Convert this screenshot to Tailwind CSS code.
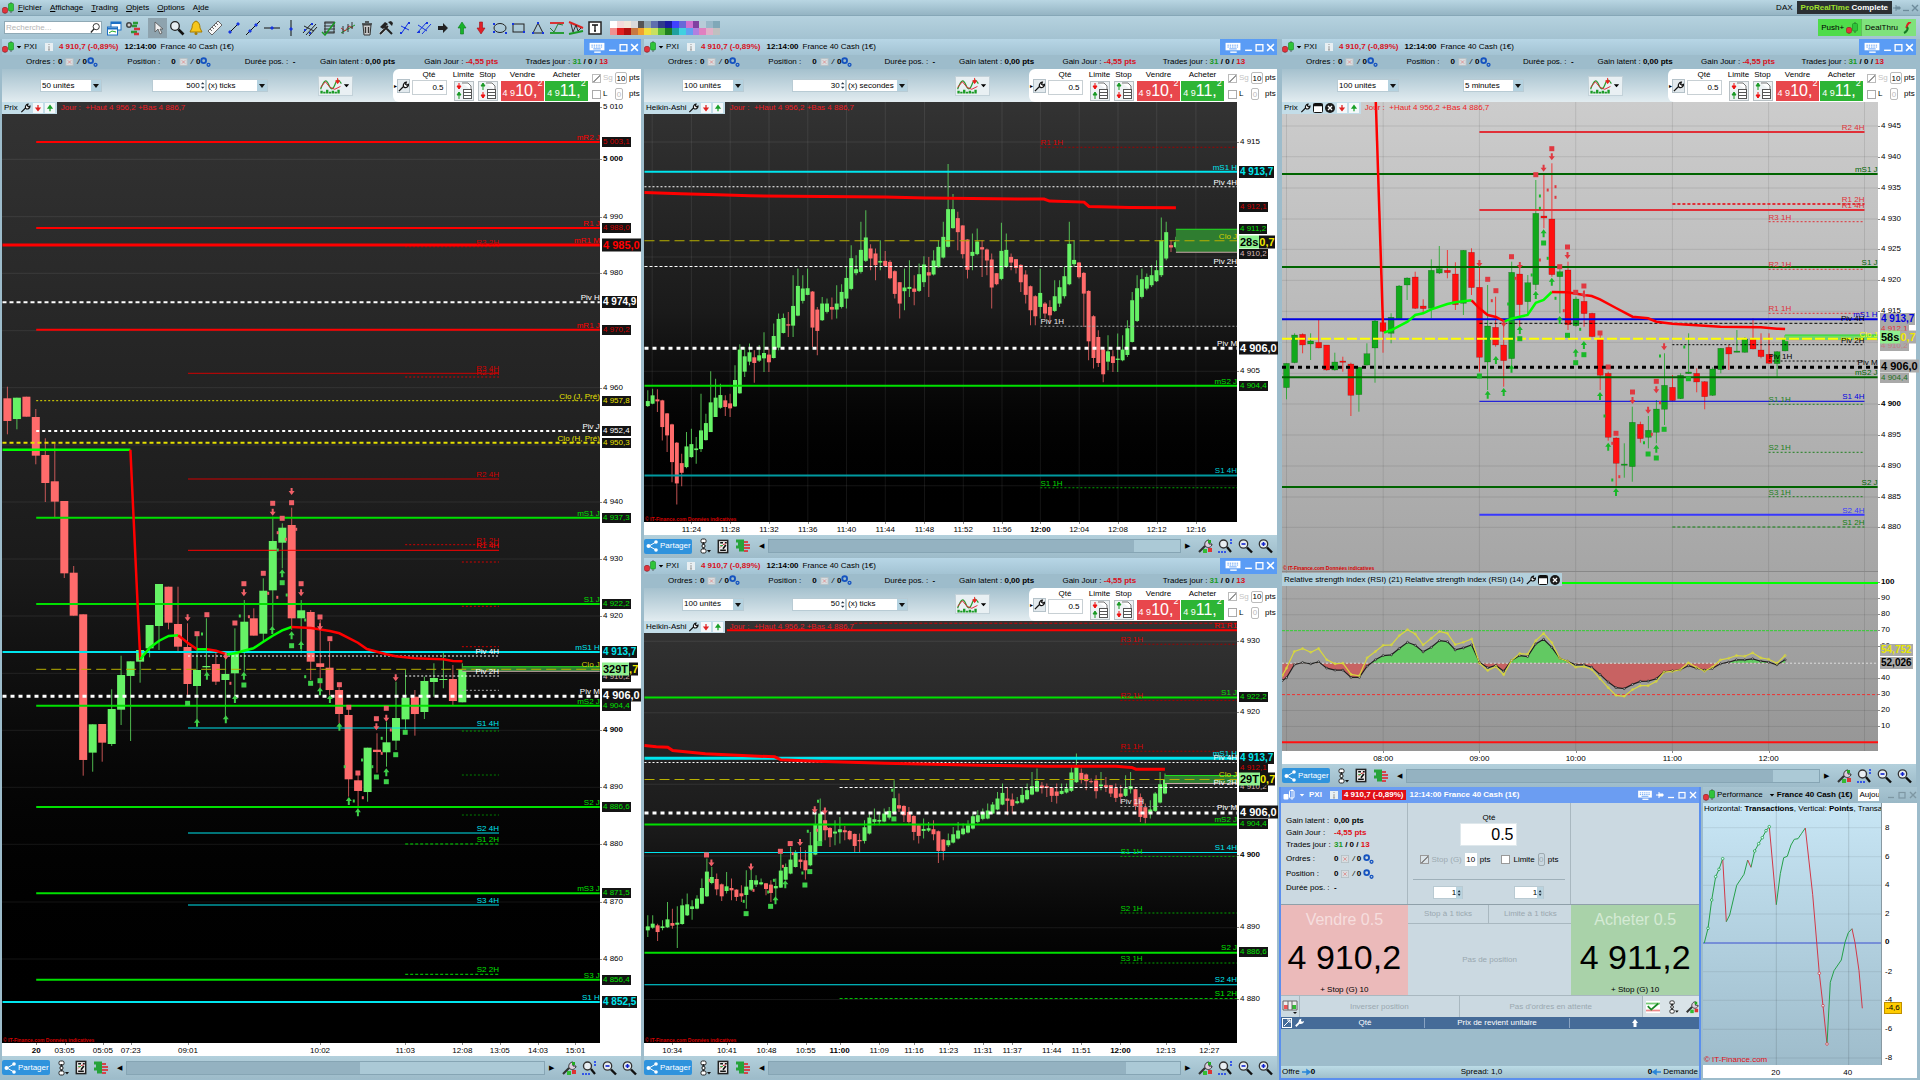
<!DOCTYPE html>
<html lang="fr">
<head>
  <meta charset="UTF-8" />
  <title>ProRealTime Complete - DAX</title>
  <script src="https://cdn.jsdelivr.net/npm/@tailwindcss/browser@4"></script>
</head>
<body class="min-h-screen flex flex-col bg-[#9dbccb] text-[8px] leading-[10px] text-black font-['Liberation_Sans',Arial,sans-serif]">

  <!-- Icon sprite -->
  <svg class="hidden">
    <symbol id="candles" viewBox="0 0 12 12"><path d="M3 5v7M9 0v11" stroke="#333" stroke-width=".7"/><rect x=".5" y="5.500" width="5" height="5.500" rx="1.500" fill="#e0343c" stroke="#a01820" stroke-width=".6"/><rect x="6.500" y="1.500" width="5" height="7.500" rx="1" fill="#2fc43a" stroke="#148a1e" stroke-width=".6"/></symbol>
    <symbol id="candles-w" viewBox="0 0 12 12"><path d="M9 0v11" stroke="#fff" stroke-width=".8"/><rect x=".5" y="5" width="5" height="5.500" rx="1" fill="#fff"/><rect x="6.500" y="1.500" width="4.500" height="7.500" rx="1" fill="none" stroke="#fff"/></symbol>
    <symbol id="caret" viewBox="0 0 8 8"><path d="M1 2.500h6L4 6z" fill="currentColor"/></symbol>
    <symbol id="info" viewBox="0 0 8 8"><rect width="8" height="8" fill="#e8eff2"/><path d="M4 1v1M4 3v4M3 7h2" stroke="#999"/></symbol>
    <symbol id="keyb" viewBox="0 0 18 14"><rect x="1" y="2" width="16" height="8" fill="#fff"/><path d="M3 4.500h12M3 6.500h12" stroke="#5a9cf5" stroke-dasharray="1.500 1"/><path d="M5 8.500h8" stroke="#5a9cf5"/><path d="M6 12h7" stroke="#fff" stroke-width="1.500"/></symbol>
    <symbol id="min" viewBox="0 0 8 8"><path d="M1 6.500h6" stroke="currentColor" stroke-width="1.300"/></symbol>
    <symbol id="max" viewBox="0 0 8 8"><rect x="1" y="1.500" width="6" height="5.500" fill="none" stroke="currentColor" stroke-width="1.200"/></symbol>
    <symbol id="close" viewBox="0 0 8 8"><path d="M1 1l6 6M7 1L1 7" stroke="currentColor" stroke-width="1.400"/></symbol>
    <symbol id="pin" viewBox="0 0 8 8"><path d="M0 4h3M3 1v6M3 3h4v2H3z" stroke="currentColor" fill="currentColor"/></symbol>
    <symbol id="xbox" viewBox="0 0 10 10"><rect x=".5" y=".5" width="9" height="9" fill="#d8dde0" stroke="#b5bfc4"/><path d="M3 3l4 4M7 3L3 7" stroke="#d88"/></symbol>
    <symbol id="gears" viewBox="0 0 12 12"><circle cx="4" cy="4" r="2.600" fill="none" stroke="#1553c0" stroke-width="2"/><circle cx="9.300" cy="8.500" r="1.600" fill="none" stroke="#1553c0" stroke-width="1.400"/></symbol>
    <symbol id="wrench" viewBox="0 0 12 12"><path d="M1 11l5-5M6 6c-.6-2 .8-4.500 3-4.700L8.300 3.500 9.500 4.500l1.900-.7C11.500 6 9 7.700 7 7z" stroke="#111" stroke-width="1.400" fill="#fff"/></symbol>
    <symbol id="wrench-w" viewBox="0 0 12 12"><path d="M1 11l5-5" stroke="#fff" stroke-width="2.400"/><path d="M5 6c-.6-3 1.200-5 3.500-5L8 4l1.500 1L12 4c0 3-3 4.500-5.500 4z" fill="#fff"/></symbol>
    <symbol id="down" viewBox="0 0 8 8"><rect width="8" height="8" fill="#f4f8fa"/><path d="M4 1.500v3M2.500 4L4 6l1.500-2z" stroke="#e02020" fill="#e02020"/></symbol>
    <symbol id="up" viewBox="0 0 8 8"><rect width="8" height="8" fill="#f4f8fa"/><path d="M4 6.500v-3M2.500 4L4 2l1.500 2z" stroke="#18a028" fill="#18a028"/></symbol>
    <symbol id="win" viewBox="0 0 10 10"><rect x=".5" y=".5" width="9" height="9" rx="1" fill="#fff" stroke="#111"/><path d="M.5 2h9" stroke="#111" stroke-width="2.500"/></symbol>
    <symbol id="xround" viewBox="0 0 10 10"><circle cx="5" cy="5" r="5" fill="#1b1b1b"/><path d="M3 3l4 4M7 3L3 7" stroke="#fff" stroke-width="1.400"/></symbol>
    <symbol id="indic" viewBox="0 0 24 18"><path d="M1 13C5 2 7 2 10 9s5 2 7-3 4-2 6 1" stroke="#2a9a30" fill="none" stroke-width="1.300"/><path d="M1 11l5-6 5 6 5 2 6-3" stroke="#d23" fill="none"/><path d="M19 1v5M17 4l2 3 2-3z" stroke="#e22" fill="#e22"/><path d="M2 17.500v-3M5 17.500v-2M8 17.500v-4M11 17.500v-2M14 17.500v-3M17 17.500v-2M20 17.500v-4" stroke="#1a9a25" stroke-width="2.500"/></symbol>
    <symbol id="ord-l" viewBox="0 0 20 20"><rect x=".5" y=".5" width="19" height="19" fill="#eef2f4" stroke="#b8c0c4"/><path d="M8 2h6l3 3v4" fill="#fff" stroke="#777"/><rect x="9.500" y="8.500" width="8" height="9" fill="#fff" stroke="#555"/><path d="M10 11.500h7M10 14.500h7" stroke="#555"/><path d="M5 2v5M3 5l2 3 2-3z" stroke="#e11" fill="#e11"/><path d="M5 18v-6M3 14l2-3 2 3z" stroke="#1a9a25" fill="#1a9a25"/></symbol>
    <symbol id="ord-s" viewBox="0 0 20 20"><rect x=".5" y=".5" width="19" height="19" fill="#eef2f4" stroke="#b8c0c4"/><path d="M8 2h6l3 3v4" fill="#fff" stroke="#777"/><rect x="9.500" y="8.500" width="8" height="9" fill="#fff" stroke="#555"/><path d="M10 11.500h7M10 14.500h7" stroke="#555"/><path d="M5 9V4M3 5l2-3 2 3z" stroke="#1a9a25" fill="#1a9a25"/><path d="M5 11v6M3 14l2 3 2-3z" stroke="#e11" fill="#e11"/></symbol>
    <symbol id="share" viewBox="0 0 12 12"><path d="M10 2L3 6l7 4" stroke="#fff" fill="none"/><circle cx="10" cy="2" r="1.800" fill="#fff"/><circle cx="2.500" cy="6" r="2" fill="#fff"/><circle cx="10" cy="10" r="1.800" fill="#fff"/></symbol>
    <symbol id="chain" viewBox="0 0 14 16"><rect x="4" y="1" width="5" height="4" rx="1.500" fill="#fff" stroke="#222"/><path d="M6.500 4v8" stroke="#222" stroke-width="2"/><circle cx="6.500" cy="8" r="1.600" fill="#fff" stroke="#222"/><rect x="4" y="11" width="5" height="4" rx="1.500" fill="#fff" stroke="#222"/><path d="M10 12h4l-2 2.500z" fill="#111"/></symbol>
    <symbol id="sheet" viewBox="0 0 14 16"><rect x="2" y="1.500" width="10" height="13" fill="#eee" stroke="#222" stroke-width="1.600"/><path d="M4 4h3M9 4h2M4 12h6M7 10.500l3-4" stroke="#111" stroke-width="1.800"/><path d="M4 9l3-3 3-1" stroke="#c33" fill="none"/><path d="M4 7h3" stroke="#2a3"/></symbol>
    <symbol id="depth" viewBox="0 0 16 16"><path d="M1 3h8M3 6h6M1 9h8M4 12h5" stroke="#26a33a" stroke-width="2.800"/><path d="M9 4h4M9 7h6M9 10h6M9 13h4" stroke="#d4444c" stroke-width="2"/></symbol>
    <symbol id="tool-c" viewBox="0 0 16 16"><path d="M2 14l6-6" stroke="#333" stroke-width="2.200"/><path d="M8 8c-1-3 1-6 4-6v4l3 0c0 3-4 5-7 2z" fill="#dcd" stroke="#333"/><path d="M6 11h4v4H6z" fill="#3b3"/><path d="M11 10h4v4h-4z" fill="#d33"/><path d="M11 2h3v3h-3z" fill="#2a2"/></symbol>
    <symbol id="z-fit" viewBox="0 0 16 16"><circle cx="6.500" cy="6" r="4" fill="#e8eef2" stroke="#333" stroke-width="1.400"/><path d="M10 9l4 5" stroke="#111" stroke-width="2.200"/><path d="M14 1v6M1 14h8" stroke="#13e" stroke-width="1.500" stroke-dasharray="2 1"/></symbol>
    <symbol id="z-out" viewBox="0 0 16 16"><circle cx="6.500" cy="6" r="4.200" fill="#e8eef2" stroke="#333" stroke-width="1.300"/><path d="M10 9.500l5 5" stroke="#111" stroke-width="2.400"/><path d="M4.500 6h4" stroke="#12c" stroke-width="1.600"/></symbol>
    <symbol id="z-in" viewBox="0 0 16 16"><circle cx="6.500" cy="6" r="4.200" fill="#e8eef2" stroke="#333" stroke-width="1.300"/><path d="M10 9.500l5 5" stroke="#111" stroke-width="2.400"/><path d="M4.500 6h4M6.500 4v4" stroke="#12c" stroke-width="1.600"/></symbol>
  </svg>

  <!-- Menu bar -->
  <header class="h-[15px] flex items-center justify-between bg-linear-to-b from-[#b9d6e3] to-[#94b4c3]">
    <nav class="flex items-center gap-2 pl-[2px]">
      <svg class="w-3 h-3"><use href="#candles"/></svg>
      <a href="#" class="-ml-1"><u>F</u>ichier</a>
      <a href="#"><u>A</u>ffichage</a>
      <a href="#"><u>T</u>rading</a>
      <a href="#"><u>O</u>bjets</a>
      <a href="#"><u>O</u>ptions</a>
      <a href="#">A<u>i</u>de</a>
    </nav>
    <div class="flex items-center h-full">
      <span class="mr-1">DAX</span>
      <span class="bg-[#2b2f33] text-white font-bold px-1 h-[13px] leading-[13px]"><span class="text-[#9fe02c]">ProRealTime</span> Complete</span>
      <span class="flex items-center gap-px text-[#6d8b9b] px-px">
        <svg class="w-2 h-2"><use href="#pin"/></svg>
        <svg class="w-2 h-2"><use href="#min"/></svg>
        <svg class="w-2 h-2"><use href="#close"/></svg>
      </span>
    </div>
  </header>

  <!-- Drawing toolbar -->
  <div class="h-6 flex items-center justify-between bg-linear-to-b from-[#b5d2df] to-[#a3c2d1] border-t border-[#86a7b7]">
    <div class="flex items-center gap-[3px] pl-1">
      <label class="flex items-center w-[98px] h-[13px] bg-white border border-[#8fa9b5] mr-px">
        <input type="text" placeholder="Recherche..." aria-label="Recherche" class="w-full pl-px outline-none placeholder:text-[#b5b5b5]" />
        <svg class="w-3 h-3" viewBox="0 0 12 12"><circle cx="7" cy="4.500" r="3.500" fill="none" stroke="#222"/><path d="M4.500 7L1 11" stroke="#222" stroke-width="1.500"/></svg>
      </label>
      <svg class="size-4" viewBox="0 0 16 16"><rect x="5" y="2" width="10" height="8" fill="#fff" stroke="#1d6fc4"/><rect x="1.500" y="7" width="10" height="8" fill="#fff" stroke="#1d6fc4"/><path d="M2 8.500h9M5 3h10" stroke="#1d6fc4" stroke-width="2"/><path d="M3 13l3-2 4 1" stroke="#2a2" fill="none"/></svg>
      <svg class="size-4 mr-1" viewBox="0 0 16 16"><circle cx="4" cy="5" r="3" fill="#444"/><path d="M2.500 5h3M4 3.500v3" stroke="#fff"/><path d="M8 3h5M7 6h5M6 12h6" stroke="#2a9a35" stroke-width="2.600"/><path d="M9 9h6M9 14h5" stroke="#d4333c" stroke-width="2.600"/></svg>
      <button class="w-[19px] h-5 -mr-px flex items-center justify-center bg-[#8ea3ae]"><svg class="w-3 h-4" viewBox="0 0 12 16"><path d="M3 2v10l3-3 2 5 2-1-2-4h3z" fill="#eee" stroke="#555" stroke-width=".8"/></svg></button>
      <svg class="size-4" viewBox="0 0 16 16"><circle cx="6" cy="6" r="4.300" fill="#e6eef2" stroke="#222" stroke-width="1.300"/><path d="M9.500 9.500l5 5" stroke="#111" stroke-width="2.600"/></svg>
      <svg class="size-4" viewBox="0 0 16 16"><path d="M8 1c3 1 4 4 4 7l2 4H2l2-4c0-3 1-6 4-7z" fill="#f6c61c" stroke="#a67c00"/><circle cx="8" cy="13.500" r="1.500" fill="#a67c00"/></svg>
      <svg class="size-4" viewBox="0 0 16 16"><path d="M11 1l4 4L5 15l-4-4z" fill="#f5f5f5" stroke="#666"/><path d="M9 3l2 2M7 5l2 2M5 7l2 2M3 9l2 2" stroke="#666"/></svg>
      <svg class="size-4" viewBox="0 0 16 16"><path d="M4 12l8-8" stroke="#111"/><path d="M3 11h2v2H3zM11 3h2v2h-2z" fill="#1636e0" stroke="#1636e0"/></svg>
      <svg class="size-4" viewBox="0 0 16 16"><path d="M1 15L15 1" stroke="#111"/><path d="M4 10h2v2H4zM10 4h2v2h-2z" fill="#1636e0" stroke="#1636e0"/></svg>
      <svg class="size-4" viewBox="0 0 16 16"><path d="M0 8h16" stroke="#111"/><path d="M7 7h2v2H7z" fill="#1636e0" stroke="#1636e0"/></svg>
      <svg class="size-4" viewBox="0 0 16 16"><path d="M8 0v16" stroke="#111"/><path d="M7 8h2v2H7z" fill="#1636e0" stroke="#1636e0"/></svg>
      <svg class="size-4" viewBox="0 0 16 16"><path d="M1 13L10 3M4 15L14 4M7 16l8-9M2 6l10 5" stroke="#222"/><path d="M2 9h2v2H2zM9 3h2v2H9zM7 12h2v2H7z" fill="#1636e0"/></svg>
      <svg class="size-4" viewBox="0 0 16 16"><path d="M3 3h11M3 6h11M3 9h11M3 12h11" stroke="#333"/><rect x="4" y="2" width="9" height="11" fill="none" stroke="#333"/><path d="M1 12l3 3L14 2" stroke="#1a9a25" fill="none" stroke-width="1.500"/></svg>
      <svg class="size-4" viewBox="0 0 16 16"><path d="M1 13L15 5" stroke="#1a9a25"/><path d="M1 8l4 3 4-5 4 2" stroke="#c33" fill="none"/><path d="M3 6v8M8 4v8M12 2v7" stroke="#333"/></svg>
      <svg class="size-4" viewBox="0 0 16 16"><path d="M4 5h8l-1 10H5z" fill="#ccc" stroke="#333"/><path d="M3 4h10M6 2h4M6.500 7v6M9.500 7v6" stroke="#333" stroke-width="1.300"/></svg>
      <svg class="size-4" viewBox="0 0 16 16"><path d="M2 14l8-8" stroke="#eee" stroke-width="3"/><path d="M2 14l8-8M14 14L6 6" stroke="#222" stroke-width="2"/><path d="M2 7l5-5 3 2-5 5zM10 2l4 4 1-3-2-2z" fill="#222"/></svg>
      <svg class="size-4" viewBox="0 0 16 16"><path d="M4 14l8-12M4 6l8 4" stroke="#1636e0"/><path d="M3 12h2v2H3zM11 2h2v2h-2zM7 7h2v2H7z" fill="#1636e0"/></svg>
      <svg class="size-4" viewBox="0 0 16 16"><path d="M1 13L11 2M6 14l9-10M2 5l9 6" stroke="#1636e0"/><path d="M2 11h2v2H2zM10 2h2v2h-2z" fill="#1636e0"/></svg>
      <svg class="size-4" viewBox="0 0 16 16"><path d="M3 6h5V3l5 5-5 5v-3H3z" fill="#222"/></svg>
      <svg class="size-4" viewBox="0 0 16 16"><path d="M6.500 14V8H4l4-6 4 6H9.500v6z" fill="#17b32a" stroke="#0b7a18" stroke-width=".6"/></svg>
      <svg class="size-4" viewBox="0 0 16 16"><path d="M6.500 2v6H4l4 6 4-6H9.500V2z" fill="#e02028" stroke="#a01018" stroke-width=".6"/></svg>
      <svg class="size-4" viewBox="0 0 16 16"><ellipse cx="8" cy="8" rx="6" ry="4.500" fill="none" stroke="#222"/><path d="M1 3h2v2H1zM1 11h2v2H1zM13 12h2v2h-2z" fill="#1636e0"/></svg>
      <svg class="size-4" viewBox="0 0 16 16"><rect x="2" y="4" width="11" height="8" fill="none" stroke="#222"/><path d="M1 3h2v2H1zM12 11h2v2h-2z" fill="#1636e0"/></svg>
      <svg class="size-4" viewBox="0 0 16 16"><path d="M8 3L3 13h10z" fill="none" stroke="#222"/><path d="M7 2h2v2H7zM2 12h2v2H2zM12 12h2v2h-2z" fill="#1636e0"/></svg>
      <svg class="size-4" viewBox="0 0 16 16"><path d="M1 3h14" stroke="#d22" stroke-width="1.800"/><path d="M1 13h14" stroke="#1a9a25" stroke-width="1.800"/><path d="M1 8l4 4 4-8 5 1" stroke="#2a7a35" fill="none"/></svg>
      <svg class="size-4" viewBox="0 0 16 16"><path d="M1 2l14 6" stroke="#d22" stroke-width="2"/><path d="M1 14l14-3" stroke="#1a9a25" stroke-width="2"/><path d="M3 4l2 8 3-7 2 6 3-3" stroke="#333" fill="none"/></svg>
      <svg class="size-4" viewBox="0 0 16 16"><rect x="2" y="2" width="12" height="12" fill="#fff" stroke="#222" stroke-width="1.500"/><path d="M5 5h6M8 5v6M7 11h2" stroke="#111" stroke-width="1.300"/></svg>
      <div id="palette" class="grid grid-cols-16 w-[110px] h-[14px] ml-1"></div>
    </div>
    <div class="flex items-center pr-1 h-full">
      <button class="h-[17px] px-[3px] flex items-center gap-[2px] bg-[#4fdc4a]">Push+ <svg class="w-3 h-3"><use href="#candles"/></svg></button>
      <button class="h-[17px] px-[3px] flex items-center gap-[3px] bg-[#7fe27c] border-l border-[#5fc05c]">DealThru <svg class="w-3 h-3" viewBox="0 0 12 12"><path d="M10 0C5 1 7 4 5 6" stroke="#d22" stroke-width="2" fill="none"/><path d="M6 5c2 2-1 5-3 6" stroke="#157a22" stroke-width="2" fill="none"/></svg></button>
    </div>
  </div>

  <!-- Workspace -->
  <main class="flex-1 grid grid-cols-[642fr_637fr_641fr] bg-[#9dbccb]">
    <section data-chart="c1" class="flex flex-col min-w-0 pl-[2px] pr-px pb-px"></section>

    <div class="flex flex-col min-w-0">
      <section data-chart="c2" class="flex flex-col flex-[519] min-w-0 px-[2px]"></section>
      <section data-chart="c3" class="flex flex-col flex-[522] min-w-0 px-[2px] pb-px"></section>
    </div>

    <div class="flex flex-col min-w-0">
      <section data-chart="c4" class="flex flex-col flex-[748] min-w-0 pl-[3px] pr-1"></section>

      <div class="flex-[293] grid grid-cols-[422fr_219fr] min-h-0">
        <!-- Order ticket -->
        <section class="flex flex-col min-w-0 border-x-2 border-b-2 border-[#5b8fee] bg-[#cbd9e1]">
          <div class="h-4 flex items-center gap-1 bg-[#6b9df2] text-white px-[2px]">
            <svg class="w-3 h-3"><use href="#candles-w"/></svg>
            <svg class="w-[6px] h-[6px]"><use href="#caret"/></svg>
            <span class="font-bold">PXI</span>
            <svg class="w-2 h-2 ml-1"><use href="#info"/></svg>
            <span class="bg-[#e01018] font-bold px-[2px]">4 910,7 (-0,89%)</span>
            <span class="font-bold">12:14:00 France 40 Cash (1€)</span>
            <span class="ml-auto flex items-center gap-[3px]">
              <svg class="w-4 h-3"><use href="#keyb"/></svg>
              <svg class="w-2 h-2"><use href="#pin"/></svg>
              <svg class="w-2 h-2"><use href="#min"/></svg>
              <svg class="w-2 h-2"><use href="#max"/></svg>
              <svg class="w-2 h-2"><use href="#close"/></svg>
            </span>
          </div>
          <div class="grid grid-cols-[127fr_164fr_128fr] h-[102px] border-b border-[#8fa0a9]">
            <dl class="grid grid-cols-[48px_1fr] auto-rows-min pt-[13px] pl-[5px] border-r border-[#a9b8c0]">
              <dt class="h-3">Gain latent :</dt><dd class="font-bold">0,00 pts</dd>
              <dt class="h-3">Gain Jour :</dt><dd class="font-bold text-[#e01018]">-4,55 pts</dd>
              <dt class="h-[14px]">Trades jour :</dt><dd class="font-bold"><span class="text-[#1a9a25]">31</span> / 0 / <span class="text-[#e01018]">13</span></dd>
              <dt class="h-[15px]">Ordres :</dt><dd class="font-bold flex gap-[2px] h-[10px] items-center">0 <svg class="w-[10px] h-2"><use href="#xbox"/></svg> <i class="font-normal">/</i> 0<svg class="w-[11px] h-[11px]"><use href="#gears"/></svg></dd>
              <dt class="h-[14px]">Position :</dt><dd class="font-bold flex gap-[2px] h-[10px] items-center">0 <svg class="w-[10px] h-2"><use href="#xbox"/></svg> <i class="font-normal">/</i> 0<svg class="w-[11px] h-[11px]"><use href="#gears"/></svg></dd>
              <dt class="h-3">Durée pos. :</dt><dd class="font-bold">-</dd>
            </dl>
            <div class="flex flex-col items-center border-r border-[#a9b8c0]">
              <label for="tk-qte" class="pt-[10px]">Qté</label>
              <input id="tk-qte" type="text" value="0.5" class="w-[57px] h-[23px] bg-white text-right pr-[3px] text-base border border-[#dfe8ec]" />
              <div class="flex items-center gap-[3px] mt-[7px]">
                <input id="tk-stop" type="checkbox" checked class="appearance-none size-[9px] border border-[#999] bg-[#dbe4e9] bg-[linear-gradient(135deg,transparent_45%,#888_45%,#888_60%,transparent_60%)]" />
                <label for="tk-stop" class="text-[#9daab1]">Stop (G)</label>
                <input type="text" value="10" aria-label="Stop pts" class="w-3 h-[13px] bg-white text-center" />
                <span class="mr-2">pts</span>
                <input id="tk-lim" type="checkbox" class="appearance-none size-[9px] border border-[#999] bg-white" />
                <label for="tk-lim">Limite</label>
                <input type="text" value="0" aria-label="Limite pts" class="w-[7px] h-[13px] text-[#9daab1] text-center border border-[#9daab1] rounded-xs" />
                <span>pts</span>
              </div>
              <hr class="w-[152px] border-[#9fb0b9] mt-[13px]" />
              <div class="flex gap-[51px] mt-[6px]">
                <span class="flex w-[30px] h-[13px] bg-white border border-[#b9cad2]"><input type="text" value="1" aria-label="Stop ticks" class="w-full text-right" /><svg class="w-2 h-3 bg-[#b9d3df]" viewBox="0 0 8 12"><path d="M2 5l2-3 2 3zM2 7l2 3 2-3z" fill="#234"/></svg></span>
                <span class="flex w-[30px] h-[13px] bg-white border border-[#b9cad2]"><input type="text" value="1" aria-label="Limite ticks" class="w-full text-right" /><svg class="w-2 h-3 bg-[#b9d3df]" viewBox="0 0 8 12"><path d="M2 5l2-3 2 3zM2 7l2 3 2-3z" fill="#234"/></svg></span>
              </div>
            </div>
            <div></div>
          </div>
          <div class="grid grid-cols-[127fr_164fr_128fr] h-[91px] border-b border-[#a9b8c0]">
            <button class="flex flex-col items-center justify-between bg-[#ebbaba] pt-[6px]">
              <span class="text-base leading-[18px] text-[#f6dede]">Vendre 0.5</span>
              <span class="text-[34px] leading-9">4 910,2</span>
              <span>+ Stop (G) 10</span>
            </button>
            <div class="grid grid-cols-2 grid-rows-[19px_1fr] text-[#9aa8b0]">
              <button class="border-r border-b border-[#a9b8c0]">Stop à 1 ticks</button>
              <button class="border-b border-[#a9b8c0]">Limite à 1 ticks</button>
              <button class="col-span-2">Pas de position</button>
            </div>
            <button class="flex flex-col items-center justify-between bg-[#a9d2a9] pt-[6px]">
              <span class="text-base leading-[18px] text-[#d5ead5]">Acheter 0.5</span>
              <span class="text-[34px] leading-9">4 911,2</span>
              <span>+ Stop (G) 10</span>
            </button>
          </div>
          <div class="h-[21px] flex text-[#9aa8b0]">
            <button aria-label="Disposition" class="w-[19px] flex items-center justify-center border-r border-[#a9b8c0]"><svg class="size-4" viewBox="0 0 16 16"><path d="M1 2h14v9H1z" fill="#eee" stroke="#666"/><path d="M2 6h4v4H2z" fill="#e55"/><path d="M10 6h4v4h-4z" fill="#3b3"/><path d="M6 2v9M10 2v9" stroke="#666"/><path d="M11 13h4l-2 2z" fill="#111"/></svg></button>
            <button class="flex-[159] border-r border-[#a9b8c0]">Inverser position</button>
            <button class="flex-[183]">Pas d'ordres en attente</button>
            <span class="flex items-center gap-[6px] w-[57px] pl-[3px] bg-[#d9e3e8] border-l border-[#a9b8c0]">
              <svg class="w-[14px] h-[14px]" viewBox="0 0 16 16"><path d="M0 1h16v14H0z" fill="#fff"/><path d="M0 4h16" stroke="#7c7" stroke-width="2"/><path d="M0 12h16" stroke="#e88" stroke-width="2"/><path d="M2 7l4 4 8-7" stroke="#1a8a25" stroke-width="2" fill="none"/></svg>
              <svg class="w-[13px] h-[14px]"><use href="#chain"/></svg>
              <svg class="w-[14px] h-[14px]"><use href="#tool-c"/></svg>
            </span>
          </div>
          <div class="h-3 grid grid-cols-[25px_118fr_144fr_128fr] items-center bg-[#456b98] text-white text-center">
            <span class="flex gap-[3px] pl-px"><svg class="w-[10px] h-[10px]" viewBox="0 0 10 10"><rect x=".5" y=".5" width="9" height="9" fill="none" stroke="#fff"/><path d="M2 8l6-6M5 2h3v3" stroke="#fff" fill="none"/></svg><svg class="w-[9px] h-[9px]"><use href="#wrench-w"/></svg></span>
            <span class="border-r border-[#89a3c2]">Qté</span>
            <span class="border-r border-[#89a3c2]">Prix de revient unitaire</span>
            <svg class="w-2 h-2 justify-self-center" viewBox="0 0 8 8"><path d="M4 0l3 4H5.500v4h-3V4H1z" fill="#fff"/></svg>
          </div>
          <div class="flex-1 bg-[#9dbccb]"></div>
          <div class="h-3 flex items-center justify-between bg-linear-to-b from-[#bcdce6] to-[#9fbfcc] px-px">
            <span class="flex items-center">Offre <svg class="w-[9px] h-2 ml-[2px]" viewBox="0 0 9 8"><path d="M0 4h6M5 2l3 2-3 2z" stroke="#2a86d8" stroke-width="1.500" fill="#2a86d8"/></svg><b>0</b></span>
            <span>Spread: 1,0</span>
            <span class="flex items-center"><b>0</b><svg class="w-[9px] h-2 mr-[2px]" viewBox="0 0 9 8"><path d="M9 4H3M4 2L1 4l3 2z" stroke="#2a86d8" stroke-width="1.500" fill="#2a86d8"/></svg> Demande</span>
          </div>
        </section>

        <!-- Performance -->
        <section class="flex flex-col min-w-0 pl-[2px] pr-[3px] pb-[2px]">
          <div class="h-4 flex items-center gap-[2px] whitespace-nowrap bg-linear-to-b from-[#a8c5d2] to-[#9ab8c6]">
            <svg class="w-3 h-3"><use href="#candles"/></svg>
            <span>Performance</span>
            <svg class="w-[6px] h-[6px] ml-1"><use href="#caret"/></svg>
            <b>France 40 Cash (1€)</b>
            <span class="bg-white h-3 leading-3 w-[21px] overflow-hidden ml-1 pl-px">Aujourd'hui</span>
            <span class="flex gap-[3px] text-[#7e97a3] ml-auto"><svg class="w-2 h-2"><use href="#min"/></svg><svg class="w-2 h-2"><use href="#max"/></svg><svg class="w-2 h-2"><use href="#close"/></svg></span>
          </div>
          <div class="flex-1 flex">
            <div id="perfPlot" class="relative flex-1 overflow-hidden bg-linear-to-b from-[#c8e6f5] to-[#9ebccb]">
              <div class="relative z-10 whitespace-nowrap overflow-hidden pl-px pt-px">Horizontal: <b>Transactions</b>, Vertical: <b>Points</b>, Transactions</div>
              <span class="absolute left-px bottom-0 text-[#e01018]">© IT-Finance.com</span>
            </div>
            <div id="perfAxis" class="relative w-[36px] bg-white border-l border-[#8899a2]"></div>
          </div>
          <div id="perfTime" class="relative h-[13px] bg-white"></div>
        </section>
      </div>
    </div>
  </main>

  <script>
    const RED = '#ff0000', DRED = '#d00000', GREEN = '#00e000', CYAN = '#00e5ee', TEAL = '#00999f', WHITE = '#ffffff', YEL = '#e6e000';
    const DG = '#006400', BLUE = '#0000e0', PINK = '#e03038', BLACK = '#000000';
    // dim line colours keep a brighter label
    const labelColor = { '#a00000': '#d80000', '#aaaaaa': '#e8e8e8', '#00a000': '#00d800', '#00c000': '#00e000', '#00999f': '#00d0d8', '#b8b000': '#d8d000' };

    // Drawing grid of a chart: ox/oy = origin, kx/3 = grid steps per pixel, box = plot rectangle.
    // candles: colour, body top, body bottom, high, low
    // levels: x1, x2, y, colour, width, dash, label, label side
    const charts = {
      c1: {
        ox: 0, oy: 120, kx: 2.431, box: [2, 102, 598, 941], theme: 'dark', title: 'Prix',
        units: '50 unités', num: '500', per: '(x) ticks', lead: 'pl-[38px]', axisW: 'w-[41px]', gap: 'ml-[50px]', gap2: 'ml-[50px]',
        first: 18, step: 23.04, cw: 8,
        candles: 'r 835 903 800 943|g 833 897 833 928|r 830 890 830 890|r 891 1007 867 1033|r 1005 1089 955 1146|r 1084 1145 970 1192|r 1143 1360 1143 1374|r 1358 1487 1338 1487|r 1483 1920 1483 1967|g 1813 1898 1813 1955|r 1812 1868 1812 1925|g 1767 1872 1708 1878|g 1665 1769 1607 1815|g 1624 1668 1624 1863|g 1590 1625 1590 1688|g 1515 1585 1515 1612|g 1392 1518 1392 1590|r 1400 1508 1400 1528|r 1512 1580 1400 1595|r 1581 1692 1510 1730|g 1650 1698 1548 1802|g 1638 1642 1495 1665|r 1632 1685 1590 1695|g 1662 1680 1615 1790|g 1600 1660 1525 1730|g 1505 1595 1440 1655|r 1495 1547 1465 1547|g 1412 1541 1375 1565|g 1263 1411 1190 1520|g 1223 1268 1210 1345|r 1215 1495 1163 1530|g 1471 1495 1440 1600|r 1476 1625 1470 1680|r 1630 1641 1500 1705|r 1643 1710 1565 1725|r 1710 1782 1702 1810|r 1785 1978 1765 2030|r 1981 2013 1965 2065|g 1883 2016 1883 2045|r 1889 1896 1840 1958|g 1867 1897 1805 1940|g 1794 1862 1685 1890|g 1733 1798 1650 1828|r 1730 1782 1710 1847|g 1683 1776 1670 1797|g 1674 1686 1630 1730|g 1677 1679 1595 1705|r 1677 1743 1635 1755|g 1648 1747 1630 1747',
        levels: [
          [88, 1458, 66, RED, 2, '', 'mR2 J', 'r'], [88, 1458, 324, RED, 2, '', 'R1 J', 'r'], [6, 1458, 375, RED, 3, '', 'mR1 M', 'r'],
          [985, 1213, 380, DRED, 1, '2 2', 'R3 2H', 'r'], [6, 1458, 547, WHITE, 2, '4 3', 'Piv H', 'r'], [88, 1458, 629, RED, 2, '', 'mR1 J', 'r'],
          [457, 1213, 760, DRED, 1, '', 'R3 4H', 'r'], [985, 1213, 771, DRED, 1, '2 2', 'R2 2H', 'r'], [88, 1458, 842, YEL, 1, '2 2', 'Clo (J, Pré)', 'r'],
          [88, 1458, 933, WHITE, 2, '3 3', 'Piv J', 'r'], [6, 1458, 968, YEL, 2, '4 3', 'Clo (H, Pré)', 'r'], [457, 1213, 1077, DRED, 1, '', 'R2 4H', 'r'],
          [88, 1458, 1193, GREEN, 2, '', 'mS1 J', 'r'], [985, 1213, 1274, DRED, 1, '2 2', 'R1 2H', 'r'], [457, 1213, 1291, RED, 1, '', 'R1 4H', 'r'],
          [1123, 1213, 1326, DRED, 1, '2 2'], [88, 1458, 1452, GREEN, 2, '', 'S1 J', 'r'], [1123, 1213, 1459, DRED, 1, '2 2'], [1123, 1213, 1580, DRED, 1, '2 2'],
          [6, 1458, 1596, CYAN, 2, '', 'mS1 H', 'r'], [457, 1213, 1608, WHITE, 1, '2 2', 'Piv 4H', 'r'], [88, 1458, 1648, '#b8b000', 1, '10 5', 'Clo J', 'r'],
          [985, 1213, 1668, WHITE, 1, '2 2', 'Piv 2H', 'r'], [1123, 1213, 1711, '#aaaaaa', 1, '2 2'], [6, 1458, 1729, WHITE, 3, '4 4', 'Piv M', 'r'],
          [88, 1458, 1757, GREEN, 2, '', 'mS2 J', 'r'], [457, 1213, 1824, CYAN, 1, '', 'S1 4H', 'r'], [1123, 1213, 1833, '#00a000', 1, '2 2'],
          [1123, 1213, 1965, '#008000', 1, '2 2'], [88, 1458, 2061, GREEN, 2, '', 'S2 J', 'r'], [1123, 1213, 2085, '#008000', 1, '2 2'],
          [457, 1213, 2139, CYAN, 1, '', 'S2 4H', 'r'], [985, 1213, 2172, GREEN, 1, '3 2', 'S1 2H', 'r'], [88, 1458, 2320, GREEN, 2, '', 'mS3 J', 'r'],
          [457, 1213, 2355, CYAN, 1, '', 'S3 4H', 'r'], [985, 1213, 2563, GREEN, 1, '3 2', 'S2 2H', 'r'], [88, 1458, 2579, GREEN, 2, '', 'S3 J', 'r'], [6, 1458, 2646, CYAN, 2, '', 'S1 H', 'r']
        ],
        ma: [['g', '6,989 317,989'], ['r', '317,989 334,1440 341,1620'], ['g', '341,1618 364,1583 387,1562 410,1548 433,1546'], ['r', '433,1546 456,1568 479,1588'], ['g', '479,1588 503,1588'], ['r', '503,1588 525,1592 549,1602'], ['g', '549,1604 571,1600 593,1592 616,1585 640,1565 663,1547 686,1531 709,1521'], ['r', '709,1521 756,1524 802,1533 825,1540 870,1568 892,1587 939,1603 962,1609 1008,1615 1078,1618 1101,1623 1124,1624']],
        marks: 'rs 663 1150|rs 709 1148|rs 686 1195|rs 593 1391|rs 640 1360|rs 732 1391|rs 503 1484|rs 479 1541|rs 571 1509|rs 778 1491|rs 802 1556|rs 825 1694|rs 848 1762|rs 870 1959|rs 915 1796|rs 939 1765|rd 709 1116|rd 663 1178|rd 593 1420|rd 732 1420|rd 456 1495|rd 778 1522|rd 549 1610|rd 915 1822|rd 962 1675|rd 939 1796|gs 686 1388|gs 593 1695|gs 456 1750|gs 709 1577|gs 755 1690|gs 778 1682|gs 985 1837|gs 962 1904|gs 939 1985|gs 915 1971|gu 686 1360|gu 593 1667|gu 503 1667|gu 479 1808|gu 549 1798|gu 571 1737|gu 709 1546|gu 732 1575|gu 662 1530|gu 778 1714|gu 802 1737|gu 825 1820|gu 939 1957|gu 848 2043|gu 870 2077|rp 652 1420|rp 674 1432|rp 720 1228|rp 675 1238|rp 695 1258|rp 560 1690|rp 605 1490|rp 928 1900|rp 882 2033|rp 950 1830|gp 675 1290|gp 697 1425|gp 583 1488|gp 491 1542|gp 742 1500|gp 742 1670|gp 838 1940|gp 905 1940|gp 928 1855|gp 860 2043|gp 880 1920',
        band: [1124, 1640, 1458, 1654],
        hgrid: [118, 290, 460, 632, 803, 975, 1146, 1317, 1488, 1660, 1831, 2002, 2173, 2346, 2517], vgrid: [],
        ticks: [[-39, '5 010'], [118, '5 000', 1], [290, '4 990'], [460, '4 980'], [803, '4 960'], [1146, '4 940'], [1317, '4 930'], [1488, '4 920'], [1831, '4 900', 1], [2002, '4 890'], [2173, '4 880'], [2346, '4 870'], [2517, '4 860']],
        tags: [[66, '5 003,1', 's', DRED], [324, '4 988,0', 's', DRED], [375, '4 985,0', 'l', RED], [547, '4 974,9', 'm', WHITE], [629, '4 970,2', 's', DRED], [842, '4 957,8', 's', YEL], [933, '4 952,4', 's', WHITE], [968, '4 950,3', 's', YEL], [1193, '4 937,3', 's', GREEN], [1452, '4 922,2', 's', GREEN], [1595, '4 913,7', 'm', CYAN], [1672, '4 910,2', 's', '#d8b8b8'], [1757, '4 904,4', 's', GREEN], [1726, '4 906,0', 'l', WHITE], [2061, '4 886,6', 's', GREEN], [2320, '4 871,5', 's', GREEN], [2579, '4 856,4', 's', GREEN], [2646, '4 852,5', 'm', CYAN]],
        last: [1648, '329T', ',7'],
        times: [[88, '20', 1], [157, '03:05'], [250, '05:05'], [318, '07:23'], [457, '09:01'], [778, '10:02'], [985, '11:03'], [1124, '12:08'], [1215, '13:05'], [1308, '14:03'], [1399, '15:01']],
        thumb: 'w-[184px]'
      },
      c2: {
        ox: 640, oy: 40, kx: 2.45, box: [644, 102, 593, 419], theme: 'dark', title: 'Heikin-Ashi',
        units: '100 unités', num: '30', per: '(x) secondes', lead: 'pl-[38px]', axisW: 'w-10', gap: 'ml-12', gap2: 'ml-[47px]',
        first: 19, step: 11.87, cw: 4,
        candles: 'g 1082 1097 1050 1100|g 1065 1090 1045 1092|r 1077 1083 1047 1115|r 1080 1160 1078 1200|r 1119 1185 1118 1235|r 1152 1265 1150 1325|r 1207 1329 1205 1392|r 1268 1297 1240 1337|g 1218 1280 1175 1283|g 1211 1250 1165 1252|g 1224 1229 1190 1270|g 1170 1226 1060 1235|g 1148 1199 1120 1200|g 1086 1175 993 1175|g 1072 1130 1015 1130|g 1064 1102 1030 1105|r 1080 1100 1065 1127|r 1089 1104 1060 1130|g 1019 1098 975 1100|g 928 1059 912 1060|g 948 994 920 1010|g 936 964 910 975|r 951 968 930 1027|g 945 961 915 965|g 938 954 876 995|r 943 966 925 995|g 887 953 850 955|g 836 922 820 930|g 833 878 820 880|r 852 856 815 890|g 797 856 705 890|g 737 826 685 828|g 745 782 705 790|g 744 764 685 765|r 754 862 752 920|r 808 872 800 945|g 790 840 770 842|g 790 815 775 820|r 800 808 772 838|g 790 808 735 835|g 755 800 732 805|g 713 775 680 805|g 654 746 615 750|g 687 699 645 705|g 629 695 545 700|g 592 662 510 665|r 625 655 612 690|r 640 675 625 720|g 662 667 600 690|r 662 677 632 680|r 665 714 660 717|r 693 761 690 775|r 726 790 725 835|g 742 753 685 810|g 740 746 660 770|r 745 755 705 795|g 702 752 670 755|g 673 726 648 740|r 696 706 650 770|g 661 703 630 706|g 620 681 600 682|g 590 652 545 655|g 507 620 372 622|g 507 564 462 566|r 534 576 515 630|r 556 642 555 655|r 598 689 597 715|g 635 647 580 690|g 604 642 565 645|r 621 628 600 710|r 628 661 625 705|r 658 742 640 805|r 699 732 698 735|g 632 716 548 720|g 629 680 580 683|r 650 667 640 690|r 657 683 656 700|r 674 726 672 755|r 703 764 690 790|r 738 810 736 855|r 768 828 765 855|g 758 800 685 835|r 790 820 785 835|r 800 825 780 850|g 768 812 720 815|g 741 790 720 800|g 708 768 680 775|g 611 732 545 735|g 659 672 600 680|r 667 711 665 715|r 698 760 695 860|r 752 903 750 960|r 828 953 825 985|r 890 968 870 980|r 928 1002 926 1026|g 933 964 885 990|r 948 968 930 995|g 955 959 880 995|g 928 960 885 963|g 864 944 840 950|g 780 905 755 907|g 744 842 705 845|g 717 770 685 775|g 710 745 700 750|g 705 735 675 740|g 690 723 660 725|g 600 705 532 710|g 576 655 545 660|r 615 622 600 635|g 606 621 590 625',
        levels: [
          [981, 1463, 322, '#a00000', 1, '2 2', 'R1 1H', 'l'], [11, 1463, 395, CYAN, 2, '', 'mS1 H', 'r'], [11, 1463, 440, WHITE, 1, '2 2', 'Piv 4H', 'r'],
          [11, 1463, 602, '#b8b000', 1, '10 5', 'Clo J', 'r'], [11, 1463, 679, WHITE, 1, '3 2', 'Piv 2H', 'r'], [981, 1463, 858, '#aaaaaa', 1, '2 2', 'Piv 1H', 'l'],
          [11, 1463, 924, WHITE, 3, '4 4', 'Piv M', 'r'], [11, 1463, 1036, GREEN, 2, '', 'mS2 J', 'r'], [11, 1463, 1305, TEAL, 2, '', 'S1 4H', 'r'], [981, 1463, 1342, '#00a000', 1, '2 2', 'S1 1H', 'l']
        ],
        ma: [['R', '11,457 100,461 190,464 270,467 600,471 700,474 990,477 1003,483 1088,486 1100,499 1200,502 1313,503']],
        marks: '', band: [1313, 567, 1463, 636],
        hgrid: [306, 650, 993, 1336], vgrid: [30, 126, 221, 316, 411, 506, 601, 697, 792, 887, 981, 1076, 1171, 1266, 1362],
        ticks: [[306, '4 915'], [993, '4 905']],
        tags: [[395, '4 913,7', 'm', CYAN], [502, '4 912,1', 's', DRED], [567, '4 911,2', 's', GREEN], [640, '4 910,2', 's', '#d8b8b8'], [924, '4 906,0', 'l', WHITE], [1036, '4 904,4', 's', GREEN]],
        last: [604, '28s', '0,7'],
        times: [[126, '11:24'], [221, '11:28'], [316, '11:32'], [411, '11:36'], [506, '11:40'], [601, '11:44'], [697, '11:48'], [792, '11:52'], [887, '11:56'], [981, '12:00', 1], [1076, '12:04'], [1171, '12:08'], [1266, '12:12'], [1362, '12:16']],
        thumb: 'w-[46px]'
      },
      c3: {
        ox: 640, oy: 650, kx: 2.45, box: [644, 621, 593, 422], theme: 'dark', title: 'Heikin-Ashi',
        units: '100 unités', num: '50', per: '(x) ticks', lead: 'pl-[38px]', axisW: 'w-10', gap: 'ml-12', gap2: 'ml-[47px]',
        first: 19, step: 12.07, cw: 4,
        candles: 'g 828 840 795 860|g 820 832 795 835|r 825 845 820 872|g 828 833 810 840|g 807 831 755 832|r 818 826 775 835|g 817 823 768 893|g 765 821 745 823|g 762 795 730 797|g 768 776 750 808|g 745 775 735 777|g 713 760 685 762|g 664 738 625 740|g 680 698 650 702|r 686 717 670 735|r 702 738 700 752|g 708 722 665 730|r 713 720 685 750|r 718 740 717 752|r 729 738 705 755|g 709 734 660 775|g 689 718 655 722|g 690 703 675 710|g 696 702 685 705|r 699 716 698 735|r 703 728 690 755|g 707 714 685 740|g 661 712 610 713|g 650 688 640 690|g 628 670 590 672|g 605 650 600 652|r 628 635 590 655|r 630 660 600 688|g 585 645 545 648|g 522 613 490 615|g 490 575 445 578|r 510 540 490 570|r 533 561 530 590|g 544 550 510 585|g 537 546 500 580|r 540 546 527 570|r 542 567 540 570|r 551 587 550 607|r 569 573 550 607|g 531 572 510 580|g 502 550 490 553|g 507 515 475 525|g 509 514 490 525|g 490 514 475 516|g 482 502 470 508|g 444 488 390 490|r 465 475 430 485|r 467 495 465 515|r 485 515 470 520|r 497 545 495 570|r 525 557 524 580|g 536 542 505 565|g 534 541 515 545|r 537 552 510 570|r 543 602 541 638|r 568 602 566 630|g 570 585 550 590|g 552 577 530 580|g 541 565 515 568|g 535 552 520 555|g 525 547 510 550|g 498 535 490 538|g 495 515 480 518|g 487 506 475 510|g 481 505 460 507|g 463 490 455 492|g 445 478 425 480|g 428 463 400 465|r 445 452 410 495|r 448 467 430 490|g 453 459 440 462|g 434 457 410 460|g 420 447 400 450|g 408 433 365 435|g 392 424 355 426|r 406 414 395 430|r 408 413 400 440|r 412 437 410 455|r 424 437 400 460|g 422 431 400 433|g 415 427 400 430|g 367 422 345 425|g 350 396 310 398|r 368 388 355 400|r 373 393 370 420|r 393 395 385 400|r 391 423 375 445|g 403 408 365 420|r 405 411 380 425|r 405 430 404 440|r 414 443 400 455|r 430 440 405 460|g 415 437 375 440|g 408 417 365 430|r 417 467 415 480|r 441 500 430 515|r 471 503 460 520|g 478 488 450 505|g 430 482 425 485|g 402 457 365 460|g 388 430 370 432',
        levels: [
          [525, 1463, -80, DRED, 1, '3 2'], [213, 1463, -59, RED, 2, '', 'R1 R1', 'r'], [1177, 1463, -17, '#a00000', 1, '2 2', 'R3 1H', 'l'],
          [11, 1463, 142, GREEN, 2, '', 'S1 J', 'r'], [1177, 1463, 151, '#a00000', 1, '2 2', 'R2 1H', 'l'], [1177, 1463, 303, '#a00000', 1, '2 2', 'R1 1H', 'l'],
          [11, 1463, 324, CYAN, 3, '', 'mS1 H', 'r'], [11, 1463, 337, WHITE, 1, '2 2', 'Piv 4H', 'r'], [11, 1463, 388, '#b8b000', 1, '10 5', 'Clo J', 'r'],
          [489, 1463, 412, WHITE, 1, '3 2', 'Piv 2H', 'r'], [1177, 1463, 469, '#aaaaaa', 1, '2 2', 'Piv 1H', 'l'], [11, 1463, 488, WHITE, 3, '4 4', 'Piv M', 'r'],
          [11, 1463, 523, GREEN, 2, '', 'mS2 J', 'r'], [11, 1463, 607, CYAN, 1, '', 'S1 4H', 'r'], [1177, 1463, 619, '#00a000', 1, '2 2', 'S1 1H', 'l'],
          [1177, 1463, 788, '#00a000', 1, '2 2', 'S2 1H', 'l'], [11, 1463, 907, GREEN, 2, '', 'S2 J', 'r'], [1177, 1463, 938, '#00a000', 1, '2 2', 'S3 1H', 'l'],
          [11, 1463, 1003, CYAN, 1, '', 'S2 4H', 'r'], [489, 1463, 1044, '#00c000', 1, '3 2', 'S1 2H', 'r']
        ],
        ma: [['R', '11,286 40,290 68,291 80,301 160,311 330,320 345,329 430,333 600,339 830,345 1000,348 1166,348 1205,352 1215,357 1286,357']],
        marks: 'rs 163 614|rs 344 603|rs 368 580|rd 175 640|rd 272 652|rd 392 578|rd 428 480|rd 453 484|gs 260 790|gs 320 768|gs 404 704|gs 416 664|gs 440 580|gs 622 506|gu 332 750|gu 356 702|gp 254 753|gp 314 725|gp 328 690|gp 411 543|gp 436 453|gp 618 420|gp 398 668|rp 278 720|rp 350 648|rp 374 610|rp 434 540|rp 458 535|rp 170 690',
        band: [1286, 376, 1463, 400],
        hgrid: [-26, 188, 402, 617, 832, 1047], vgrid: [],
        ticks: [[-26, '4 930'], [188, '4 920'], [617, '4 900', 1], [832, '4 890'], [1047, '4 880']],
        tags: [[142, '4 922,2', 's', GREEN], [354, '4 912,1', 's', DRED], [325, '4 913,7', 'm', CYAN], [413, '4 910,2', 's', '#d8b8b8'], [524, '4 904,4', 's', GREEN], [488, '4 906,0', 'l', WHITE], [907, '4 886,6', 's', GREEN]],
        last: [389, '29T', '0,7'],
        times: [[79, '10:34'], [213, '10:41'], [310, '10:48'], [406, '10:55'], [489, '11:00', 1], [586, '11:09'], [671, '11:16'], [756, '11:23'], [840, '11:31'], [912, '11:37'], [1009, '11:44'], [1081, '11:51'], [1177, '12:00', 1], [1288, '12:13'], [1395, '12:27']],
        thumb: 'w-[54px]'
      },
      c4: {
        ox: 1275, oy: 100, kx: 2.431, box: [1282, 102, 596, 469], theme: 'light', title: 'Prix',
        units: '100 unités', per: '5 minutes', lead: 'pl-[55px]', axisW: 'w-[38px]', gap2: 'ml-16',
        first: 28, step: 19.55, cw: 6,
        candles: 'g 790 863 790 898|g 705 788 700 790|r 703 735 700 760|g 723 732 700 780|r 727 744 660 745|r 735 810 735 812|g 786 810 758 812|r 783 787 770 815|r 792 886 788 948|g 802 884 800 935|g 761 795 730 797|g 663 744 660 848|r 668 694 660 758|g 652 700 640 730|g 558 658 555 660|g 534 555 532 600|r 531 625 515 627|r 618 626 598 640|g 511 625 478 655|g 506 519 438 522|r 511 518 450 535|r 522 614 487 630|g 451 610 450 645|r 457 563 445 585|r 562 772 500 815|g 678 786 555 870|r 682 735 590 740|r 735 782 670 860|g 517 776 485 800|r 522 614 505 680|g 548 605 525 645|g 340 554 240 570|r 348 354 225 385|r 357 524 190 530|g 515 530 505 640|r 510 674 485 690|g 597 677 590 680|r 604 641 570 680|r 640 710 638 712|r 715 826 700 870|r 820 1012 815 1022|r 1014 1090 1012 1160|g 1092 1096 1030 1133|g 967 1100 920 1145|r 973 1016 965 1028|g 991 1012 948 1045|g 927 997 900 1030|g 856 928 760 975|r 862 902 825 903|g 826 896 820 897|g 816 821 700 822|r 820 846 805 877|r 845 890 843 928|g 807 886 802 888|g 745 809 744 820|r 742 762 735 810|g 753 757 690 757|g 717 757 712 758|r 715 747 655 748|r 750 770 700 775|r 763 790 700 792|g 755 791 753 830|g 715 753 705 754',
        levels: [
          [497, 1433, 96, PINK, 2, '', 'R2 4H', 'r'], [17, 1465, 222, DG, 2, '', 'mS1 J', 'r'], [966, 1433, 312, PINK, 2, '3 2', 'R1 2H', 'r'], [497, 1433, 330, PINK, 2, '', 'R1 4H', 'r'],
          [1200, 1433, 365, PINK, 1, '2 2', 'R3 1H', 'l'], [17, 1465, 501, DG, 2, '', 'S1 J', 'r'], [1200, 1433, 508, PINK, 1, '2 2', 'R2 1H', 'l'], [1200, 1433, 640, PINK, 1, '2 2', 'R1 1H', 'l'],
          [17, 1465, 658, BLUE, 2, '', 'mS1 H', 'r'], [497, 1433, 670, BLACK, 1, '3 2', 'Piv 4H', 'r'], [17, 1465, 716, '#ffff00', 2, '10 3', 'Clo J', 'r'],
          [966, 1433, 734, BLACK, 1, '2 2', 'Piv 2H', 'r'], [1200, 1433, 783, BLACK, 1, '2 2', 'Piv 1H', 'l'], [17, 1465, 802, BLACK, 3, '4 4', 'Piv M', 'r'],
          [17, 1465, 832, DG, 2, '', 'mS2 J', 'r'], [497, 1433, 904, BLUE, 1, '', 'S1 4H', 'r'], [1200, 1433, 913, '#208020', 1, '2 2', 'S1 1H', 'l'], [1200, 1433, 1057, '#208020', 1, '2 2', 'S2 1H', 'l'],
          [17, 1465, 1161, DG, 2, '', 'S2 J', 'r'], [1200, 1433, 1190, '#208020', 1, '2 2', 'S3 1H', 'l'], [497, 1433, 1244, '#3838ff', 2, '', 'S2 4H', 'r'], [966, 1433, 1281, '#108010', 1, '3 2', 'S1 2H', 'r']
        ],
        ma: [['r', '245,5 263,695'], ['g', '265,698 283,690 322,665 341,645 360,640 380,628 419,612 438,607 478,601'], ['r', '478,601 497,625 517,645 537,651 556,663'], ['g', '556,665 575,656 595,650 614,645 634,608 653,600 673,576'], ['r', '673,576 711,577 751,585 770,588 790,598 829,624 869,650 907,655 927,665 966,671 1083,680 1181,682 1220,686 1240,687']],
        marks: 'rs 673 146|rs 634 224|rs 575 470|rs 711 441|rs 517 538|rs 537 572|rs 751 558|rs 692 500|rs 731 577|rs 790 699|rs 810 801|rs 829 1000|rs 869 876|rs 927 844|rd 673 172|rd 653 206|rd 595 498|rd 497 492|rd 711 468|rd 556 672|rd 751 585|rd 869 903|rd 907 932|rd 927 871|rd 946 742|gs 653 429|gs 497 828|gs 711 706|gs 751 764|gs 731 788|gs 595 716|gs 907 1062|gs 927 1074|gs 946 988|gs 1005 836|gu 653 400|gu 673 545|gu 634 585|gu 595 690|gu 692 660|gu 517 884|gu 556 876|gu 575 806|gu 537 780|gu 731 758|gu 751 735|gu 790 888|gu 810 1040|gu 829 1176|gu 927 1046|rp 682 260|rp 682 292|rp 663 270|rp 644 480|rp 527 602|rp 585 535|rp 702 632|rp 837 1130|rp 916 1003|rp 936 908|rp 820 1030|gp 644 288|gp 644 325|gp 663 475|gp 742 688|gp 682 595|gp 820 1140|gp 897 1028|gp 801 948|gp 936 768|gp 995 741|gp 567 612|gp 624 525',
        band: [1240, 705, 1465, 722],
        hgrid: [78, 170, 264, 357, 448, 541, 634, 727, 820, 912, 1005, 1098, 1191, 1282], vgrid: [28, 263, 497, 731, 966, 1200, 1433],
        ticks: [[78, '4 945'], [170, '4 940'], [264, '4 935'], [357, '4 930'], [448, '4 925'], [541, '4 920'], [634, '4 915'], [912, '4 900', 1], [1005, '4 895'], [1098, '4 890'], [1191, '4 885'], [1282, '4 880']],
        tags: [[688, '4 912,1', 's', PINK], [657, '4 913,7', 'm', BLUE], [738, '4 910,2', 's', '#c08080'], [835, '4 904,4', 's', '#207020'], [798, '4 906,0', 'l', BLACK]],
        last: [711, '58s', '0,7'],
        times: [[263, '08:00'], [497, '09:00'], [731, '10:00'], [966, '11:00'], [1200, '12:00']],
        thumb: 'w-[46px]',
        rsi: {
          oy: 570, box: [1282, 571, 596, 180],
          slow: '18,330 28,322 47,283 67,276 87,280 106,274 126,293 146,299 165,299 185,321 205,321 224,287 244,268 263,255 283,253 302,234 322,215 341,224 360,244 380,230 400,210 419,213 438,238 458,232 478,223 497,275 517,292 537,285 556,302 575,270 595,255 614,258 634,220 653,206 673,230 692,263 711,272 731,283 751,283 770,290 790,312 810,335 829,352 849,355 869,342 888,333 907,332 927,325 946,304 966,301 985,298 1005,286 1024,293 1044,299 1063,294 1083,280 1103,275 1122,268 1142,268 1161,265 1181,272 1200,275 1220,283 1240,268',
          fast: '18,315 28,293 47,243 67,234 87,245 106,234 126,268 146,280 165,278 185,312 205,316 224,262 244,243 263,224 283,223 302,195 322,177 341,190 360,223 380,203 400,182 419,188 438,222 458,215 478,205 497,278 517,300 537,288 556,313 575,270 595,249 614,251 634,210 653,188 673,216 692,263 711,272 731,290 751,288 770,297 790,325 810,352 829,375 849,378 869,358 888,346 907,346 927,333 946,305 966,303 985,298 1005,277 1024,290 1044,302 1063,290 1083,268 1103,263 1122,255 1142,257 1161,247 1181,262 1200,266 1220,278 1240,255',
          ticks: [[36, '100', 1], [84, '90'], [132, '80'], [180, '70'], [228, '60'], [325, '40'], [373, '30'], [421, '20'], [469, '10']],
          hgrid: [84, 132, 228, 325, 421, 469],
          tags: [[241, '54,752', 'm', '#e8e800'], [278, '52,026', 'm', BLACK]]
        }
      }
    };

    const use = (id, cls) => `<svg class="${cls}"><use href="#${id}"/></svg>`;

    function select(label, value, w) {
      return `<span class="relative flex ${w} h-[13px]">
        <select aria-label="${label}" class="appearance-none w-full bg-white border border-[#b8cbd4] pl-px"><option>${value}</option></select>
        <svg class="absolute right-px top-px w-[10px] h-[11px] bg-[#b4d2e0] pointer-events-none" viewBox="0 0 10 11"><path d="M2 4h6L5 8z" fill="#111"/></svg>
      </span>`;
    }

    function head(id, c) {
      return `
      <div class="h-4 flex items-center bg-linear-to-b from-[#b7d6e6] to-[#a3c3d3]">
        ${use('candles', 'w-3 h-3')}
        ${use('caret', 'w-[6px] h-[6px] ml-[2px]')}
        <span class="ml-[2px]">PXI</span>
        ${use('info', 'w-2 h-2 ml-2')}
        <b class="text-[#d8101c] ml-[6px]">4 910,7 (-0,89%)</b>
        <b class="ml-[6px]">12:14:00</b>
        <span class="ml-1">France 40 Cash (1€)</span>
        <span class="ml-auto h-full flex items-center gap-[2px] pl-1 pr-[2px] bg-[#5a9cf5] text-white">
          ${use('keyb', 'w-[18px] h-[13px]')}${use('min', 'w-[9px] h-[9px]')}${use('max', 'w-[9px] h-[9px]')}${use('close', 'w-[9px] h-[9px]')}
        </span>
      </div>
      <div class="h-[14px] grid grid-cols-[101fr_117fr_75fr_104fr_101fr_115fr] items-center pl-[24px] bg-[#9dbccb] whitespace-nowrap">
        <span class="flex items-center gap-[3px]">Ordres : <b>0</b>${use('xbox', 'w-[9px] h-2')}<i>/</i><b class="flex items-center">0${use('gears', 'w-[11px] h-[11px]')}</b></span>
        <span class="flex items-center gap-[3px]">Position : <b class="pl-2">0</b>${use('xbox', 'w-[9px] h-2')}<i>/</i><b class="flex items-center">0${use('gears', 'w-[11px] h-[11px]')}</b></span>
        <span>Durée pos. : &nbsp;<b>-</b></span>
        <span>Gain latent : <b>0,00 pts</b></span>
        <span>Gain Jour : <b class="text-[#d8101c]">-4,55 pts</b></span>
        <span>Trades jour : <b><span class="text-[#1a9a25]">31</span> / 0 / <span class="text-[#d8101c]">13</span></b></span>
      </div>
      <div class="h-[33px] flex justify-between bg-linear-to-b from-[#a5c1ce] to-[#e2ecf0]">
        <div class="flex items-center flex-1 ${c.lead}">
          ${select('Unités', c.units, 'w-[62px]')}
          ${c.num ? `<span class="flex w-[54px] h-[13px] ${c.gap} bg-white border border-[#b8cbd4]"><input type="text" value="${c.num}" aria-label="Période" class="w-full text-right" /><svg class="w-[6px] h-[11px]" viewBox="0 0 6 11"><path d="M1 4l2-2 2 2zM1 7l2 2 2-2z" fill="#234"/></svg></span>${select('Type', c.per, 'w-[62px]')}` : `<span class="w-16"></span>${select('Type', c.per, 'w-[61px]')}`}
          <button aria-label="Indicateurs" class="${c.gap2} w-[35px] h-5 flex items-center bg-[#e9f0f3] border border-[#c3d2d9]">${use('indic', 'w-6 h-[17px]')}${use('caret', 'w-[7px] h-[7px]')}</button>
        </div>
        <div class="w-[248px] flex bg-white rounded-l-md pl-px pt-px">
          <span class="self-center text-[6px]">▸</span>
          <button aria-label="Réglages" class="self-center w-[13px] h-[14px] bg-[#e3eaee] border border-[#b5c2c9]">${use('wrench', 'w-[11px] h-[11px]')}</button>
          <div class="flex flex-col items-center w-[36px] ml-px"><label for="${id}q">Qté</label><input id="${id}q" type="text" value="0.5" class="w-[35px] h-[15px] border border-[#c8d0d4] text-right pr-[2px]" /></div>
          <button class="flex flex-col items-center w-[25px] ml-1">Limite${use('ord-l', 'w-5 h-5 mt-px')}</button>
          <button class="flex flex-col items-center w-[23px]">Stop${use('ord-s', 'w-5 h-5 mt-px')}</button>
          <button class="flex flex-col items-center w-[43px] ml-[2px]">Vendre<span class="w-full h-5 mt-px flex items-baseline justify-center bg-[#e8474c] text-white text-[9px] leading-5">4 9<span class="text-base leading-5">10,</span><sup class="text-[9px] self-start leading-3">2</sup></span></button>
          <button class="flex flex-col items-center w-[43px] ml-px">Acheter<span class="w-full h-5 mt-px flex items-baseline justify-center bg-[#2db535] text-white text-[9px] leading-5">4 9<span class="text-base leading-5">11,</span><sup class="text-[9px] self-start leading-3">2</sup></span></button>
          <div class="grid grid-cols-[10px_11px_13px_1fr] gap-x-px items-center ml-1 flex-1">
            <input id="${id}sg" type="checkbox" checked class="appearance-none size-[9px] border border-[#bbb] bg-[linear-gradient(135deg,transparent_45%,#999_45%,#999_60%,transparent_60%)]" />
            <label for="${id}sg" class="text-[#c4c4c4]">Sg</label>
            <input type="text" value="10" aria-label="Stop garanti" class="w-[12px] h-3 border border-[#bbb] text-center rounded-xs" /><span>pts</span>
            <input id="${id}l" type="checkbox" class="appearance-none size-[9px] border border-[#aaa]" />
            <label for="${id}l">L</label>
            <input type="text" value="0" aria-label="Limite" class="w-2 h-3 border border-[#bbb] text-[#bbb] text-center rounded-xs" /><span>pts</span>
          </div>
        </div>
      </div>`;
    }

    function foot(c) {
      return `
      <div class="h-[23px] flex items-center bg-linear-to-b from-[#b3d0dc] to-[#9dbbc9]">
        <button class="h-[15px] w-12 flex items-center gap-[2px] pl-[2px] bg-[#2f93dd] text-white rounded-xs">${use('share', 'w-3 h-3')}Partager</button>
        <span class="flex items-center gap-[5px] ml-[5px]">${use('chain', 'w-[14px] h-4')}${use('sheet', 'w-[14px] h-[15px]')}${use('depth', 'w-4 h-4')}</span>
        <button aria-label="Reculer" class="w-3 h-3 ml-1 mr-px text-[7px]">◀</button>
        <div class="flex-1 h-[14px] flex justify-end bg-[#94b2c1] border border-[#86a5b4]"><div class="${c.thumb} h-full bg-[#abc9d6]"></div></div>
        <button aria-label="Avancer" class="w-3 h-3 text-[7px]">▶</button>
        <span class="flex items-center gap-1 mx-1">${use('tool-c', 'w-4 h-4')}${use('z-fit', 'w-4 h-4')}${use('z-out', 'w-4 h-4')}${use('z-in', 'w-4 h-4')}</span>
      </div>`;
    }

    const pct = (v, o, len) => ((v - o) / len * 100).toFixed(3) + '%';

    function axis(c, oy, box) {
      const top = v => `top:${pct(oy + v / 3, box[1], box[3])}`;
      const light = c.theme === 'light';
      let out = '';
      c.ticks.forEach(([y, t, b]) => {
        out += `<span class="absolute left-[3px] -translate-y-1/2 whitespace-nowrap ${b ? 'font-bold' : ''}" style="${top(y)}">${t}</span><i class="absolute left-0 w-[2px] h-px bg-[#888]" style="${top(y)}"></i>`;
      });
      const size = { s: 'h-[10px] leading-[10px]', m: 'h-3 leading-3 text-[10px] font-bold', l: 'h-[13px] leading-[13px] text-[11px] font-bold' };
      c.tags.forEach(([y, t, s, col]) => {
        out += `<span class="absolute left-[2px] -translate-y-1/2 whitespace-nowrap px-px ${size[s]} ${light ? 'bg-[#a9a9a9]' : 'bg-[#141414]'}" style="${top(y)};color:${col}">${t}</span>`;
      });
      if (c.last) {
        out += `<span class="absolute left-[2px] -translate-y-1/2 flex whitespace-nowrap h-[13px] leading-[13px] text-[11px] font-bold" style="${top(c.last[0])}"><span class="bg-[#90f090] px-px">${c.last[1]}</span><span class="${light ? 'bg-[#a9a9a9]' : 'bg-[#141414]'} text-[#f0e800]">${c.last[2]}</span></span>`;
      }
      return out;
    }

    function grid(c, X, Y, box, stroke) {
      let s = '';
      c.hgrid.forEach(y => s += `<path d="M${box[0]} ${Y(y)}h${box[2]}" stroke="${stroke}"/>`);
      (c.vgrid || []).forEach(x => s += `<path d="M${X(x)} ${box[1]}v${box[3]}" stroke="${stroke}"/>`);
      return s;
    }

    function plot(c) {
      const [bx, by, bw, bh] = c.box;
      const X = v => +(c.ox + v / c.kx).toFixed(1);
      const Y = v => +(c.oy + v / 3).toFixed(1);
      const light = c.theme === 'light';
      const up = light ? '#12a81c' : '#66f266', dn = light ? '#ff1010' : '#ff6b6b';
      let s = grid(c, X, Y, c.box, light ? '#00000018' : '#ffffff14'), labels = '';

      c.candles.split('|').forEach((row, i) => {
        const [k, t, b, h, l] = row.split(' ');
        const x = X(c.first + c.step * i), col = k === 'g' ? up : dn;
        s += `<path d="M${x} ${Y(h)}V${Y(l)}" stroke="${col}" stroke-width="1" opacity=".75"/>`;
        s += `<rect x="${x - c.cw / 2}" y="${Y(t)}" width="${c.cw}" height="${Math.max(1, (b - t) / 3)}" fill="${col}"${light ? ' stroke="#00000050" stroke-width=".5"' : ''}/>`;
      });

      const [x1, y1, x2, y2] = c.band;
      s += `<rect x="${X(x1)}" y="${Y(y1)}" width="${(x2 - x1) / c.kx}" height="${(y2 - y1) / 3}" fill="${light ? '#6fd66f' : '#2f7d30'}"/><path d="M${X(x1)} ${Y(y1)}H${X(x2)}" stroke="#20e020"/><path d="M${X(x1)} ${Y(y2)}H${X(x2)}" stroke="#c8a8a8"/>`;

      c.levels.forEach(([a, b, y, col, w, dash, label, side]) => {
        s += `<path d="M${X(a)} ${Y(y)}H${X(b)}" stroke="${col}" stroke-width="${w}" stroke-dasharray="${dash || 'none'}"/>`;
        if (!label) return;
        const h = side === 'r' ? `right:${pct(bx + bw, X(b), bw)}` : `left:${pct(X(a), bx, bw)}`;
        labels += `<span class="absolute -translate-y-full leading-[9px] whitespace-nowrap" style="top:${pct(Y(y), by, bh)};${h};color:${labelColor[col] || col}">${label}</span>`;
      });

      c.ma.forEach(([k, pts]) => {
        const p = pts.split(' ').map(q => { const [x, y] = q.split(','); return X(+x) + ',' + Y(+y); }).join(' ');
        s += `<polyline points="${p}" fill="none" stroke="${k === 'g' ? '#00ff00' : '#ff0000'}" stroke-width="${k === 'R' ? 3 : 2.500}"/>`;
      });

      c.marks && c.marks.split('|').forEach(m => {
        const [k, mx, my] = m.split(' ');
        const x = X(+mx), y = Y(+my);
        const col = k[0] === 'g' ? (light ? '#18b828' : '#3fd04a') : (light ? '#e03840' : '#f06068');
        const shape = {
          s: `M${x - 2.5} ${y - 2.5}h5v5h-5z`,
          d: `M${x - 1} ${y - 4}h2v3h2l-3 4-3-4h2z`,
          u: `M${x - 1} ${y + 4}h2v-4h2l-3-4-3 4h2z`,
          p: `M${x - 1} ${y - 1.5}h2v3h-2z`
        }[k[1]];
        s += `<path d="${shape}" fill="${col}"/>`;
      });

      const extra = light ? use('win', 'w-[10px] h-[10px]') + use('xround', 'w-[10px] h-[10px]') : '';
      return `
      <div class="flex flex-1 min-h-0" style="flex-grow:${bh}">
        <div class="relative flex-1 overflow-hidden ${light ? 'bg-linear-to-b from-[#cccccc] to-[#a6a6a6]' : 'bg-linear-to-b from-[#333333] via-[#1a1a1a] to-black'}">
          <svg class="absolute inset-0 w-full h-full" viewBox="${c.box.join(' ')}" preserveAspectRatio="none">${s}</svg>
          ${labels}
          <div class="absolute left-0 top-0 flex items-center gap-1 h-3">
            <span class="flex items-center gap-[2px] h-3 px-[2px] bg-[#c3dde8]">${c.title}${use('wrench', 'w-[11px] h-[10px]')}${extra}${use('down', 'w-[10px] h-[10px]')}${use('up', 'w-[10px] h-[10px]')}</span>
            <span class="text-[#ee1c24]">Jour : &nbsp;+Haut 4 956,2 +Bas 4 886,7</span>
          </div>
          <span class="absolute left-px bottom-0 text-[5px] leading-[6px] font-bold text-[#d80000]">© IT-Finance.com  Données indicatives</span>
        </div>
        <div class="relative ${c.axisW} bg-white">${axis(c, c.oy, c.box)}</div>
      </div>`;
    }

    function rsiPlot(c) {
      const r = c.rsi, [bx, by, bw, bh] = r.box;
      const X = v => +(c.ox + v / c.kx).toFixed(1), Y = v => +(r.oy + v / 3).toFixed(1);
      const map = str => str.split(' ').map(q => q.split(',').map(Number)).map(([x, y]) => [X(x), Y(y)]);
      const slow = map(r.slow), fast = map(r.fast), mid = Y(278);
      const area = `M${slow[0][0]} ${mid}L${slow.map(p => p.join(' ')).join('L')}L${slow[slow.length - 1][0]} ${mid}z`;
      let s = grid({ hgrid: r.hgrid, vgrid: c.vgrid }, X, Y, r.box, '#00000018');
      s += `<clipPath id="above"><rect x="${bx}" y="${by}" width="${bw}" height="${mid - by}"/></clipPath><clipPath id="below"><rect x="${bx}" y="${mid}" width="${bw}" height="100"/></clipPath>`;
      s += `<path d="${area}" fill="#62c962" clip-path="url(#above)"/><path d="${area}" fill="#c86262" clip-path="url(#below)"/>`;
      s += `<path d="M${bx} ${mid}h${bw}" stroke="#ddd" stroke-dasharray="2 2"/>`;
      s += `<path d="M${bx} ${Y(36)}h${bw}" stroke="#00ff00" stroke-width="2"/><path d="M${bx} ${Y(517)}h${bw}" stroke="#ff1010" stroke-width="2"/>`;
      s += `<path d="M${bx} ${Y(180)}h${bw}" stroke="#30d030" stroke-dasharray="3 1"/><path d="M${bx} ${Y(373)}h${bw}" stroke="#f03030" stroke-dasharray="3 2"/>`;
      s += `<polyline points="${slow.join(' ')}" fill="none" stroke="#202020" stroke-width="1.200"/><polyline points="${fast.join(' ')}" fill="none" stroke="#d8d83c" stroke-width="1.200"/>`;
      slow.forEach(([x, y]) => s += `<circle cx="${x}" cy="${y}" r="1" fill="#bbb" stroke="#202020" stroke-width=".7"/>`);
      fast.forEach(([x, y]) => s += `<circle cx="${x}" cy="${y}" r="1" fill="none" stroke="#d8d83c" stroke-width=".8"/>`);
      return `
      <div class="flex flex-1 min-h-0" style="flex-grow:${bh}">
        <div class="relative flex-1 overflow-hidden bg-linear-to-b from-[#a8a8a8] to-[#969696] border-t border-[#888]">
          <svg class="absolute inset-0 w-full h-full" viewBox="${r.box.join(' ')}" preserveAspectRatio="none">${s}</svg>
          <span class="absolute left-0 top-px flex items-center gap-[2px] h-[13px] px-[2px] bg-[#b3d0dc]">Relative strength index (RSI) (21) Relative strength index (RSI) (14)${use('wrench', 'w-[10px] h-[10px]')}${use('win', 'w-[10px] h-[10px]')}${use('xround', 'w-[10px] h-[10px]')}</span>
        </div>
        <div class="relative ${c.axisW} bg-white">${axis({ theme: c.theme, ticks: r.ticks, tags: r.tags }, r.oy, r.box)}</div>
      </div>`;
    }

    function timeRow(c) {
      const full = c.box[2];
      return `<div class="flex h-[13px] bg-white"><div class="relative flex-1">${c.times.map(([x, t, b]) =>
        `<i class="absolute top-0 w-px h-[2px] bg-[#888]" style="left:${pct(c.ox + x / c.kx, c.box[0], full)}"></i><span class="absolute top-[3px] -translate-x-1/2 ${b ? 'font-bold' : ''}" style="left:${pct(c.ox + x / c.kx, c.box[0], full)}">${t}</span>`).join('')}</div><div class="${c.axisW}"></div></div>`;
    }

    document.querySelectorAll('[data-chart]').forEach(el => {
      const id = el.dataset.chart, c = charts[id];
      el.innerHTML = head(id, c) + plot(c) + (c.rsi ? rsiPlot(c) : '') + timeRow(c) + foot(c);
    });

    // Performance curve
    (function () {
      const box = [1703, 803, 178, 262];
      const X = v => +(1690 + v / 3).toFixed(1), Y = v => +(780 + v / 3).toFixed(1);
      const runs = [['g', '43,489 54,445 65,360 77,290 87,268 98,236'], ['r', '98,236 109,425'], ['g', '109,425 119,405 140,316 162,283 173,240'], ['r', '173,240 183,262'], ['g', '183,262 194,213 206,191 217,173 228,152 238,140'], ['r', '238,140 259,374'], ['g', '259,374 271,281 281,233 292,229 303,195 313,178 324,176 335,160 346,144'], ['r', '346,144 368,344 388,580 399,677 411,792'], ['g', '411,792 421,607 432,572 454,540 465,487 475,458 486,446'], ['r', '486,446 495,488 507,572 517,685']];
      let s = '';
      [143, 230, 316, 402, 575, 661, 748, 834].forEach(y => s += `<path d="M${box[0]} ${Y(y)}h178" stroke="#00000014"/>`);
      [259, 476].forEach(x => s += `<path d="M${X(x)} 803v262" stroke="#00000020"/>`);
      s += `<path d="M${box[0]} ${Y(489)}h178" stroke="#3a4fd0"/>`;
      runs.forEach(([k, p]) => s += `<polyline points="${p.split(' ').map(q => { const [x, y] = q.split(','); return X(+x) + ',' + Y(+y); }).join(' ')}" fill="none" stroke="${k === 'g' ? '#25a04a' : '#d23848'}" stroke-width="1"/>`);
      [['g', 54, 445], ['g', 65, 360], ['g', 77, 290], ['g', 87, 268], ['g', 98, 236], ['g', 194, 213], ['g', 206, 191], ['g', 217, 173], ['g', 228, 152], ['g', 238, 140], ['r', 388, 580], ['r', 399, 677], ['r', 411, 792]]
        .forEach(([k, x, y]) => s += `<circle cx="${X(x)}" cy="${Y(y)}" r="1.300" fill="#dff" stroke="${k === 'g' ? '#25a04a' : '#d23848'}" stroke-width=".8"/>`);
      document.getElementById('perfPlot').insertAdjacentHTML('afterbegin', `<svg class="absolute inset-0 w-full h-full" viewBox="${box.join(' ')}" preserveAspectRatio="none">${s}</svg>`);
      const at = y => `top:${pct(Y(y), box[1], box[3])}`;
      document.getElementById('perfAxis').innerHTML = [[143, '8'], [230, '6'], [316, '4'], [402, '2'], [487, '0', 1], [575, '-2'], [661, '-4'], [748, '-6'], [834, '-8']]
        .map(([y, t, b]) => `<span class="absolute left-[3px] -translate-y-1/2 ${b ? 'font-bold' : ''}" style="${at(y)}">${t}</span>`).join('')
        + `<span class="absolute left-[2px] -translate-y-1/2 bg-[#ffcc00] border border-[#c09000] px-px" style="${at(684)}">-4,6</span>`;
      document.getElementById('perfTime').innerHTML = [[257, '20'], [473, '40']]
        .map(([x, t]) => `<span class="absolute top-[3px] -translate-x-1/2" style="left:${pct(X(x), 1703, 214)}">${t}</span>`).join('');
    })();

    // Colour palette
    const swatches = ['#ffffff', '#f4dada', '#f2e6d8', '#d9d9d9', '#555555', '#8fa5b0', '#5f6fae', '#303a8c', '#1a1aa0', '#4040ff', '#6868d8', '#d070d0', '#8040a0', '#b8ccd8', '#98b8c8', '#80a8b8',
      '#f09090', '#e02020', '#b01010', '#c87840', '#f0a030', '#f0e040', '#c8e060', '#60c040', '#208020', '#20a0a0', '#40d0e0', '#60a0f0', '#b080e0', '#e080c0', '#e0b0c8', '#c0c0c0'];
    document.getElementById('palette').innerHTML = swatches.map(c => `<i style="background:${c}"></i>`).join('');
  </script>
</body>
</html>
